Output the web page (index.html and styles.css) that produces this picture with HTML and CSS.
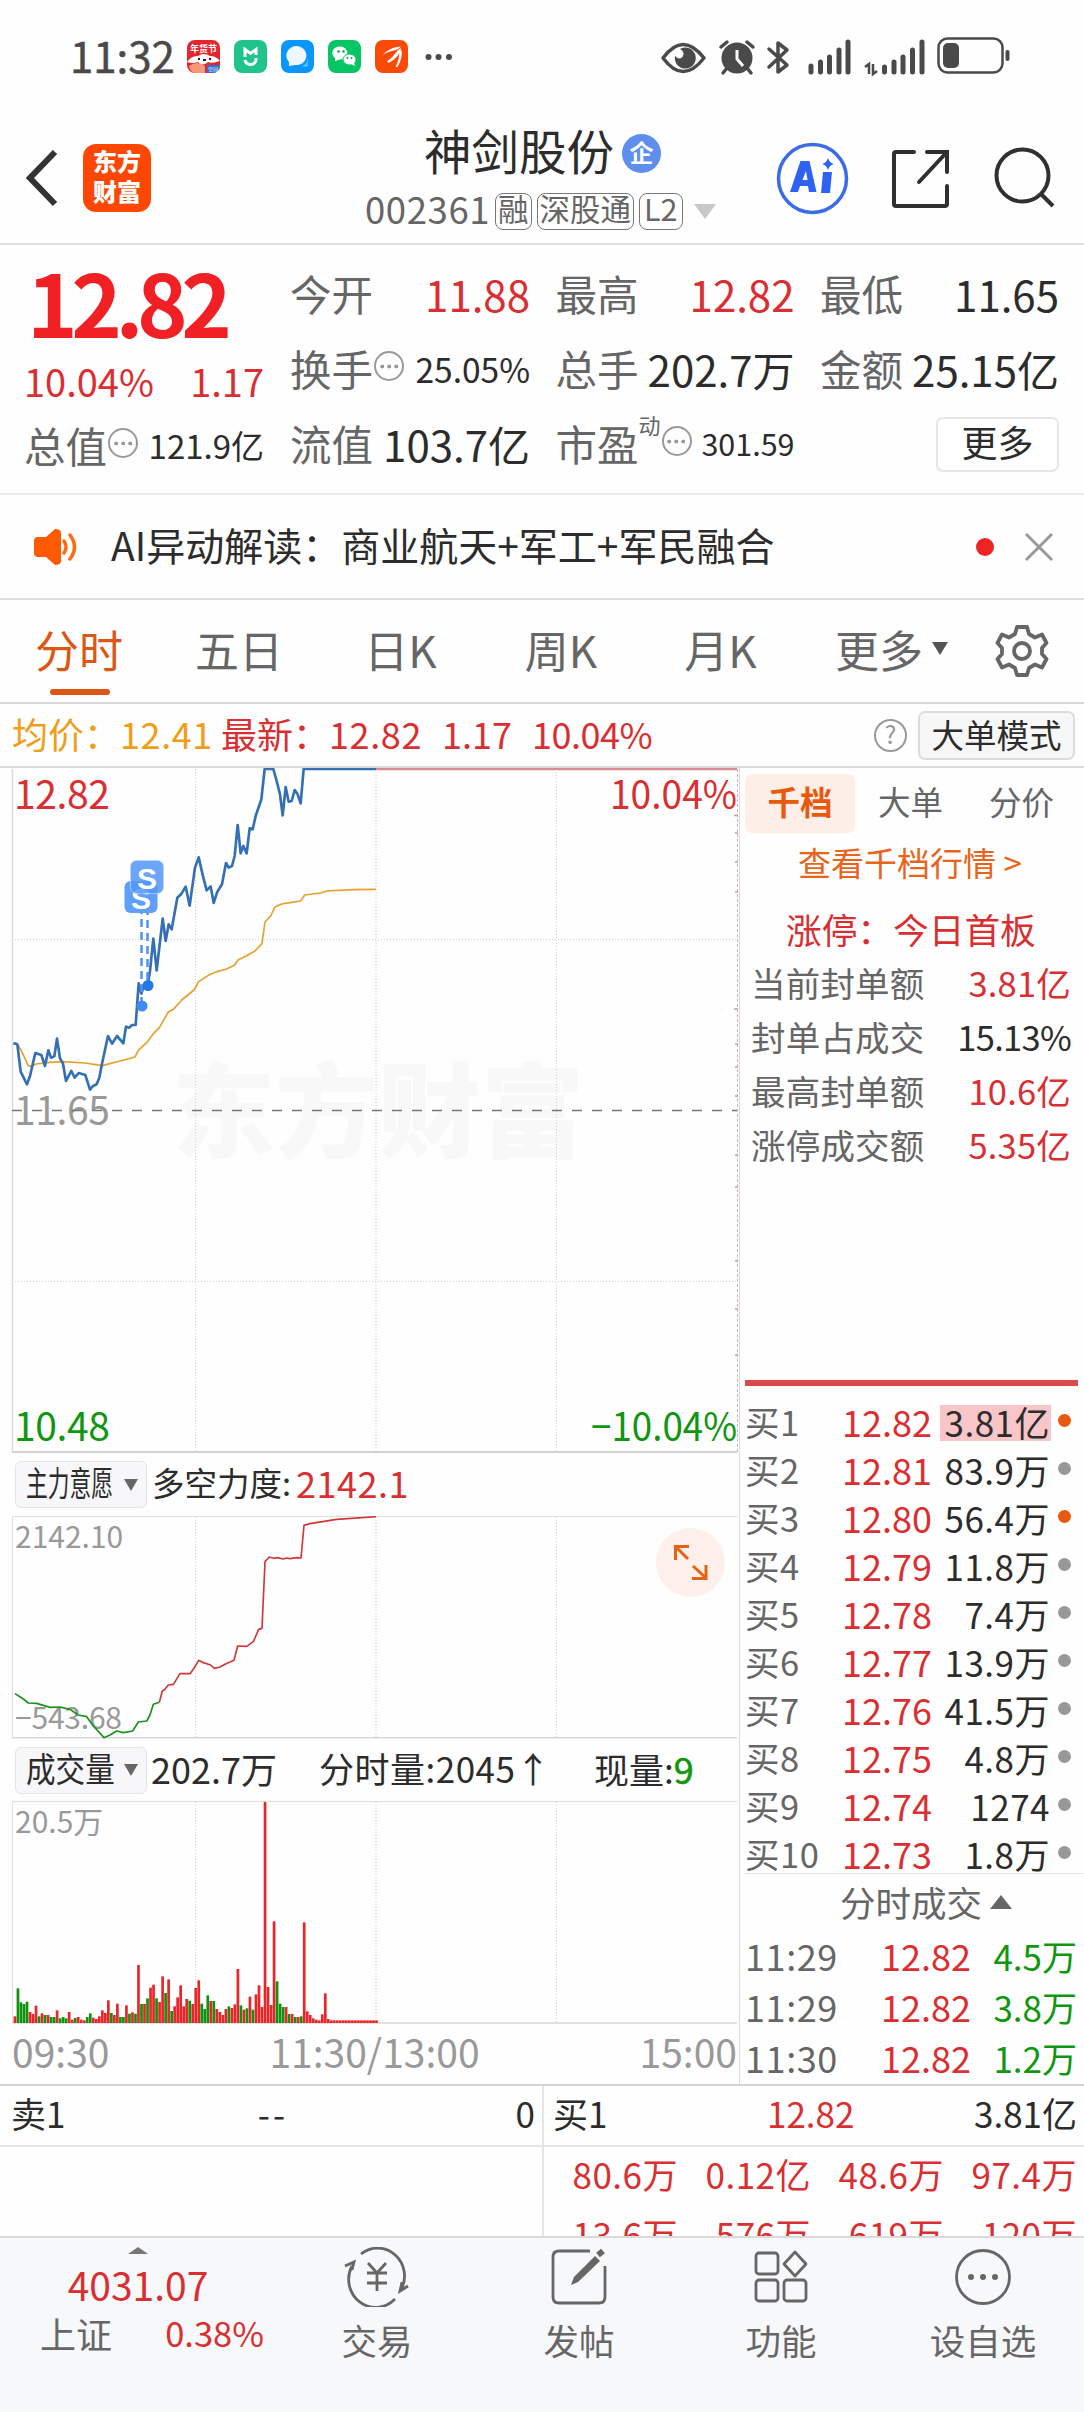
FILE: index.html
```html
<!DOCTYPE html>
<html lang="zh-CN">
<head>
<meta charset="utf-8">
<title>神剑股份 002361</title>
<link rel="stylesheet" href="styles.css">
</head>
<body>
<div class="status">
  <span class="clock">11:32</span>
  <div class="apps">
    <svg class="app" viewBox="0 0 33 33"><rect width="33" height="33" rx="8" fill="#e5242c"/><text x="16.500" y="12" font-size="9" font-weight="700" fill="#fff" text-anchor="middle">年货节</text><path d="M0 22q5-7 11-6q6-4 12 0q6 0 10 5q-8 3-12 1q-6 5-10 0q-5 2-11 0z" fill="#fff"/><path d="M11 19h2M16 20h3M22 19h2" stroke="#222" stroke-width="2"/><path d="M2 26q8-6 16 0v7H9q-6 0-7-7z" fill="#f59a78"/><path d="M20 25h13q0 8-8 8h-5z" fill="#2f6fd6"/><text x="26" y="31" font-size="5" fill="#fff" text-anchor="middle">空间</text></svg>
    <svg class="app" viewBox="0 0 33 33"><rect width="33" height="33" rx="8" fill="#1fc48c"/><path d="M11 17V9.500l5.500 4 5.500-4V15M11 20q1 4.500 5.500 4.500T22 20v-2" fill="none" stroke="#fff" stroke-width="3"/></svg>
    <svg class="app" viewBox="0 0 33 33"><rect width="33" height="33" rx="8" fill="#0a96ff"/><path d="M21 26q5-2 6-8v8q-2 2-6 0z" fill="#49c3ff"/><path d="M8 26v-4a10 9.500 0 1 1 6 3z" fill="#edf6ff"/></svg>
    <svg class="app" viewBox="0 0 33 33"><rect width="33" height="33" rx="8" fill="#07c562"/><path d="M7 21v-3a7.500 6.500 0 1 1 5 1.500z" fill="#fff"/><ellipse cx="21.500" cy="19.500" rx="6.500" ry="5.500" fill="#fff" stroke="#07c562"/><path d="M23 24l4 2-1-4z" fill="#fff"/><g fill="#07a050"><circle cx="10.500" cy="11.500" r="1.200"/><circle cx="15.500" cy="11.500" r="1.200"/><circle cx="19.500" cy="18" r="1"/><circle cx="23.500" cy="18" r="1"/></g></svg>
    <svg class="app" viewBox="0 0 33 33"><rect width="33" height="33" rx="8" fill="#fb4a05"/><path d="M7.500 15.500Q14 7 26 6.500Q23 10 17 11Q11 12 7.500 15.500zM12 21.500Q18 17 21 12.500Q23 9 26 8Q25 17 13.500 23zM20.500 27Q24 20 24 15Q24.500 11 26.500 9.500Q28 18 22.500 27z" fill="#fff"/></svg>
    <svg class="dots" viewBox="0 0 28 8" fill="#4a4a4a"><circle cx="3.500" cy="4" r="3"/><circle cx="13.500" cy="4" r="3"/><circle cx="24" cy="4" r="3"/></svg>
  </div>
  <svg class="sys" viewBox="658 34 356 44" fill="none" stroke="#4a4a4a">
    <path d="M663 58Q683 31 704 58Q683 85 663 58z" stroke-width="3.500" stroke-linejoin="round"/>
    <path d="M680 49a10.500 10.500 0 1 1-5 7q5 5 8 0q2-4-3-7z" fill="#4a4a4a" stroke="none"/>
    <circle cx="737" cy="58" r="15.500" fill="#4a4a4a" stroke="none"/>
    <path d="M737 50v9l6 7" stroke="#fff" stroke-width="3"/>
    <path d="M721 47l6-5M747 42l6 5M727 68l-4 5M747 68l4 5" stroke-width="3.500" stroke-linecap="round"/>
    <path d="M769 49l18 16-9 7V43l9 7-18 17" stroke-width="3.500" stroke-linejoin="round" stroke-linecap="round"/>
    <path d="M811 67v6M820.500 63v10M829.500 58v15M839 51v22M848 43v30" stroke-width="5" stroke-linecap="round" transform="translate(0 -1)"/>
    <path d="M884.500 67v5M894 62v10M903 57v15M912.500 50v22M922 42v30" stroke-width="5" stroke-linecap="round"/>
    <path d="M865 67l4-3v10M873 64v10l4-3" stroke-width="2.500"/>
    <rect x="938.500" y="38.500" width="64" height="34" rx="9" stroke-width="2.500"/>
    <rect x="943" y="43" width="16" height="25" rx="5" fill="#4a4a4a" stroke="none"/>
    <path d="M1007.500 52v7" stroke-width="4" stroke-linecap="round"/>
  </svg>
</div>

<header class="header">
  <svg class="back" viewBox="0 0 34 60"><path d="M29 4L4 30l25 26" fill="none" stroke="#333" stroke-width="6"/></svg>
  <div class="logo"><span>东方</span><span>财富</span></div>
  <div class="title">
    <div class="name">神剑股份<span class="qi">企</span></div>
    <div class="code"><span class="num">002361</span><span class="tag">融</span><span class="tag">深股通</span><span class="tag">L2</span><i class="caret"></i></div>
  </div>
  <svg class="tools" viewBox="775 140 285 76" fill="none" stroke="#303030" stroke-width="4">
    <circle cx="812.500" cy="178.500" r="34" stroke="#3d6ae6" stroke-width="3.500"/>
    <path d="M790 192l10.500-31h9l7 31h-7.500l-1-6h-8l-2 6zM802.500 180h5l-1.500-9z" fill="#2f62f2" stroke="none"/>
    <path d="M823 172h9l-2 21h-9z" fill="#2f62f2" stroke="none"/>
    <path d="M828 158q1.500 5 6 6-4.500 1-6 6-1.500-5-6-6 4.500-1 6-6z" fill="#2f62f2" stroke="none"/>
    <path d="M914 152h-18q-2 0-2 2v50q0 2 2 2h49q2 0 2-2v-18M927 152h20v20M947 152l-28 30" stroke-linecap="round"/>
    <circle cx="1022.500" cy="175.500" r="26"/><path d="M1041 194l12 12"/>
  </svg>
</header>

<section class="quote">
  <div class="q-left">
    <div class="price">12.82</div>
    <div class="pct"><span>10.04%</span><span>1.17</span></div>
    <div class="cell s33"><label>总值</label><i class="more"></i><b>121.9亿</b></div>
  </div>
  <div class="q-grid">
    <div class="cell"><label>今开</label><b class="red">11.88</b></div>
    <div class="cell"><label>最高</label><b class="red">12.82</b></div>
    <div class="cell"><label>最低</label><b>11.65</b></div>
    <div class="cell s34"><label>换手</label><i class="more"></i><b>25.05%</b></div>
    <div class="cell"><label>总手</label><b>202.7万</b></div>
    <div class="cell"><label>金额</label><b>25.15亿</b></div>
    <div class="cell"><label>流值</label><b>103.7亿</b></div>
    <div class="cell s30"><label>市盈</label><sup>动</sup><i class="more"></i><b>301.59</b></div>
    <div class="cell"><button class="btn-more">更多</button></div>
  </div>
</section>

<section class="news">
  <svg class="horn" viewBox="0 0 46 38"><path d="M5 9h8L22 1q6 0 6 4v28q0 4-6 4l-9-8H5q-4 0-4-4V13q0-4 4-4z" fill="#ff5a00"/><path d="M31 13q4 6 0 12M37 7q9 12 0 24" fill="none" stroke="#ff6a14" stroke-width="3.500" stroke-linecap="round"/></svg>
  <span class="headline">AI异动解读：商业航天+军工+军民融合</span>
  <i class="reddot"></i>
  <svg class="close" viewBox="0 0 30 30"><path d="M2 2l26 26M28 2L2 28" stroke="#999" stroke-width="3"/></svg>
</section>

<nav class="tabs">
  <span class="on">分时</span><span>五日</span><span>日K</span><span>周K</span><span>月K</span><span class="t-more">更多<i></i></span>
  <svg class="gear" viewBox="-27 -27 54 54" fill="none" stroke="#666" stroke-width="3.800"><path d="M-5-24H5L7-17 13-13.500 20-16.500 24.500-8 20-3V3L24.500 8 20 16.500 13 13.500 7 17 5 24H-5L-7 17-13 13.500-20 16.500-24.500 8-20 3V-3L-24.500-8-20-16.500-13-13.500-7-17z" stroke-linejoin="round"/><circle r="8"/></svg>
</nav>

<section class="info">
  <span class="avg">均价：</span><span class="avg v1">12.41</span><span class="red">最新：</span><span class="red v2">12.82</span><span class="red v3">1.17</span><span class="red v4">10.04%</span>
  <i class="help">?</i><button class="mode">大单模式</button>
</section>

<main class="body">
  <div class="charts">
    <svg class="c-main" viewBox="0 767 739 685">
      <text x="172" y="1149" class="mark" textLength="412">东方财富</text>
      <path d="M195.500 768v683M376 768v683M556.500 768v683M12 938.500h725M12 1280.500h725" class="grid"/>
      <path d="M737.500 768v683" stroke="#c9b5b8" stroke-dasharray="3 2"/>
      <path d="M734 814.500h4M735 832h3M735 861h3M735 891h3M734 1008h4M735 1043h3M735 1066h3M735 1095h3M735 1154h3M735 1186h3M735 1260h3M735 1308h3M735 1354h3" stroke="#c99" stroke-width="1.500"/>
      <path d="M12.500 768v683" stroke="#dcdcdc" stroke-width="1.500"/><path d="M12 1451h725" stroke="#d2d2d2" stroke-width="2"/>
      <text x="14" y="808" class="ax red" textLength="96">12.82</text><text x="737" y="808" class="ax red end" textLength="127" lengthAdjust="spacingAndGlyphs">10.04%</text>
      <text x="14" y="1124" class="ax gray" textLength="96">11.65</text>
      <text x="14" y="1440" class="ax green" textLength="96">10.48</text><text x="737" y="1440" class="ax green end" textLength="146" lengthAdjust="spacingAndGlyphs">−10.04%</text>
      <path d="M12 1109.500h725" stroke="#777" stroke-width="1.700" stroke-dasharray="10 10"/>
      <path d="M376 768h361" stroke="#d98b94" stroke-width="2.500"/>
      <g transform="translate(0 600) scale(.33333)" fill="none" stroke-linejoin="round">
        <path stroke="#e5a12d" stroke-width="5" d="M45 1325L55 1333 70 1362 85 1394 95 1396 108 1389 150 1384 189 1382 255 1386 306 1394 330 1388 360 1380 405 1368 415 1348 440 1325 460 1298 478 1280 505 1233 520 1225 545 1197 582 1167 596 1142 625 1123 650 1112 680 1104 704 1092 714 1077 740 1064 765 1050 786 1027 795 963 812 945 825 918 845 909 870 905 902 900 914 882 960 876 980 870 1060 866 1128 865"/>
        <path stroke="#356fb4" stroke-width="8" d="M40 1327L52 1330 62 1412 81 1450 90 1425 106 1356 124 1362 135 1395 145 1348 153 1370 163 1366 171 1313 180 1372 189 1388 198 1440 214 1410 224 1430 236 1416 256 1422 270 1466 279 1455 290 1450 298 1430 306 1388 324 1305 336 1328 351 1305 370 1327 378 1277 388 1280 396 1272 407 1272 416 1147 424 1178 433 1150 441 1165 450 1110 460 1013 470 1108 488 953 497 1020 506 970 515 985 532 890 543 880 557 857 569 914 585 800 596 769 610 830 620 868 632 856 641 906 652 872 666 850 678 786 686 800 696 795 704 765 713 672 722 757 730 735 740 757 749 682 758 685 767 645 784 595 794 504 820 504 830 540 840 580 848 643 857 558 866 602 875 600 884 567 893 580 902 607 911 504 1128 504"/>
      </g>
      <g>
        <path d="M141.500 905v96M147.500 893v88" stroke="#4f94ee" stroke-width="2.500" stroke-dasharray="8 5"/>
        <circle cx="142" cy="1005" r="5.500" fill="#3f8cf0"/><circle cx="148" cy="984.500" r="5.500" fill="#2378e6"/>
        <rect x="124.500" y="880" width="33" height="32" rx="6" fill="#5f9ffa"/><text x="141" y="908" class="s">S</text>
        <rect x="130.500" y="859.500" width="33" height="33" rx="6" fill="#5297fa" fill-opacity=".85" stroke="#b9d6ff" stroke-width=".7"/><text x="147" y="888" class="s">S</text>
      </g>
    </svg>
    <div class="bar"><span class="pick"><em class="narrow">主力意愿</em><i></i></span><span class="t1">多空力度:</span><span class="t2 red">2142.1</span></div>
    <svg class="c-force" viewBox="0 1515 739 223">
      <path d="M195.500 1516v221M376 1516v221M556.500 1516v221" class="grid"/>
      <path d="M12.500 1737v-221.500h725" fill="none" stroke="#dedede"/><path d="M12 1736.700h725" stroke="#d8d8d8" stroke-width="1.500"/>
      <text x="15" y="1547" class="sm gray">2142.10</text><text x="15" y="1728" class="sm gray" textLength="107">−543.68</text>
      <g transform="translate(0 1360) scale(.33333)" fill="none" stroke-linejoin="round" stroke-width="5">
        <path stroke="#1d911d" d="M45 998L70 1014 85 1026 110 1027 150 1039 180 1038 210 1045 235 1062 260 1067 280 1095 312 1130 330 1122 350 1110 370 1115 398 1110 415 1083 440 1080 450 1062 460 1030 478 1024"/>
        <path stroke="#d0393b" d="M478 1024L487 990 495 985 505 972 520 970 540 938 570 938 582 922 596 898 610 905 632 912 643 922 660 918 675 910 702 898 713 855 740 856 760 842 776 805 786 802 795 602 808 588 820 592 832 590 850 594 860 591 870 593 890 590 903 591 912 493 930 488 1010 475 1128 467"/>
      </g>
      <circle cx="690.500" cy="1561.500" r="34.500" fill="#fdf0ea"/>
      <path d="M688 1558l-12-12M675.500 1559v-13.500h13.500M693 1565l13 12M706 1564v13.500h-14" fill="none" stroke="#e06414" stroke-width="3"/>
    </svg>
    <div class="bar b2"><span class="pick"><em class="narrow w3">成交量</em><i></i></span><span class="t3">202.7万</span><span class="t4">分时量:2045↑</span><span class="t5">现量:<b class="green">9</b></span></div>
    <svg class="c-vol" viewBox="0 1800 739 223">
      <path d="M195.500 1801v220M376 1801v220M556.500 1801v220" class="grid"/>
      <path d="M12.500 2022v-221.500h725" fill="none" stroke="#dedede"/><path d="M12 2022h725" stroke="#e2e2e2" stroke-width="2"/>
      <text x="15" y="1832" class="sm gray">20.5万</text>
      <g id="bars"></g>
    </svg>
    <div class="times"><span>09:30</span><span>11:30/13:00</span><span>15:00</span></div>
  </div>

  <aside class="side">
    <div class="stabs"><span class="on">千档</span><span>大单</span><span>分价</span></div>
    <div class="link">查看千档行情 &gt;</div>
    <div class="limit">涨停：今日首板</div>
    <div class="stats">
      <div><span>当前封单额</span><b class="red">3.81亿</b></div>
      <div><span>封单占成交</span><b class="p">15.13%</b></div>
      <div><span>最高封单额</span><b class="red">10.6亿</b></div>
      <div><span>涨停成交额</span><b class="red">5.35亿</b></div>
    </div>
    <hr class="redline">
    <div class="bids">
      <div><span>买1</span><em>12.82</em><b class="hot">3.81亿</b><i class="o"></i></div>
      <div><span>买2</span><em>12.81</em><b>83.9万</b><i></i></div>
      <div><span>买3</span><em>12.80</em><b>56.4万</b><i class="o"></i></div>
      <div><span>买4</span><em>12.79</em><b>11.8万</b><i></i></div>
      <div><span>买5</span><em>12.78</em><b>7.4万</b><i></i></div>
      <div><span>买6</span><em>12.77</em><b>13.9万</b><i></i></div>
      <div><span>买7</span><em>12.76</em><b>41.5万</b><i></i></div>
      <div><span>买8</span><em>12.75</em><b>4.8万</b><i></i></div>
      <div><span>买9</span><em>12.74</em><b>1274</b><i></i></div>
      <div><span>买10</span><em>12.73</em><b>1.8万</b><i></i></div>
    </div>
    <div class="deals-h">分时成交<i></i></div>
    <div class="deals">
      <div><span>11:29</span><em>12.82</em><b>4.5万</b></div>
      <div><span>11:29</span><em>12.82</em><b>3.8万</b></div>
      <div><span>11:30</span><em>12.82</em><b>1.2万</b></div>
    </div>
  </aside>
</main>

<section class="queue">
  <div class="qcol"><div class="qrow"><span>卖1</span><span class="dash">--</span><span>0</span></div></div>
  <div class="qcol buy"><div class="qrow"><span>买1</span><span class="red">12.82</span><span>3.81亿</span></div>
    <div class="orders"><span>80.6万</span><span>0.12亿</span><span>48.6万</span><span>97.4万</span><span>13.6万</span><span>576万</span><span>619万</span><span>120万</span></div></div>
</section>

<footer class="nav">
  <div class="index"><i></i><div class="ival">4031.07</div><div class="irow"><span>上证</span><b>0.38%</b></div></div>
  <div class="item"><svg viewBox="-34 -30 68 60"><path d="M-16-23A27 28 0 0 1 24 13M-25-11A27 28 0 0 0 18 22M-32-11l9-4-2 8M31 9l-8 5 2-9" /><path d="M-9-14L0-4 9-14M0-4v18M-10-4h20M-10 6h20"/></svg><span>交易</span></div>
  <div class="item"><svg viewBox="-34 -30 68 60"><path d="M11-26h-31q-6 0-6 6v40q0 6 6 6h40q6 0 6-6v-31"/><path d="M-8 8l3-8L16-21l5 5L-1 5z" fill="#666" stroke="none"/><path d="M19-22l5-4" stroke-width="6"/></svg><span>发帖</span></div>
  <div class="item"><svg viewBox="-34 -30 68 60"><rect x="-25" y="-24" width="22" height="21" rx="3"/><path d="M14-25l11 12-11 12L3-13z" stroke-linejoin="round"/><rect x="-25" y="3" width="22" height="21" rx="3"/><rect x="3" y="3" width="22" height="21" rx="3"/></svg><span>功能</span></div>
  <div class="item"><svg viewBox="-34 -30 68 60"><circle r="26.500"/><g fill="#666" stroke="none"><circle cx="-12" r="3"/><circle r="3"/><circle cx="12" r="3"/></g></svg><span>设自选</span></div>
</footer>
<script src="chart.js"></script>
</body>
</html>
```
FILE: chart.js
```js
// Minute volume bars: colour letter (r = up, g = down) followed by height in thirds of a pixel.
const volumes = ("r20 g104 g62 g57 g64 r33 r27 r52 g20 r29 g24 r24 g18 g18 r38 g14 g18 g14 r33 r10 " +
  "g15 r18 r10 r8 g18 g29 r16 r12 r20 r38 r30 r68 g30 r24 r58 g18 g18 r53 g28 r32 " +
  "g28 r174 g57 r57 g74 r106 r115 g74 r63 r140 g90 r131 g36 r50 r77 r113 r50 r72 g67 r57 " +
  "r105 r128 g58 g42 g83 r66 g66 r42 r33 r24 r42 g50 r45 r56 r162 g53 r40 g44 r79 g40 " +
  "r86 r113 r48 r663 r108 r54 r305 g125 g58 g48 r48 g27 r27 g18 r18 g20 r302 r35 r24 r14 " +
  "r10 r8 r26 r89 r12").split(" ");
while (volumes.length < 121) volumes.push("r8");

const bars = document.getElementById("bars");
volumes.forEach((v, i) => {
  const h = Number(v.slice(1)) / 3;
  const rect = document.createElementNS("http://www.w3.org/2000/svg", "rect");
  rect.setAttribute("x", (13.6 + i * 3.013).toFixed(2));
  rect.setAttribute("y", (2022 - h).toFixed(2));
  rect.setAttribute("width", "2.7");
  rect.setAttribute("height", h.toFixed(2));
  rect.setAttribute("class", v[0] === "r" ? "up" : "down");
  bars.appendChild(rect);
});
```
FILE: styles.css
```css
* { box-sizing: border-box; }
body { margin: 0; width: 1084px; height: 2412px; overflow: hidden; background: #fefefe; color: #2c2c2c; font-family: "Noto Sans CJK SC", "Noto Sans", sans-serif; font-size: 36px; line-height: 1; white-space: nowrap; }
b, em, i { font-weight: 400; font-style: normal; }
button { font: inherit; color: inherit; padding: 0; }
svg { display: block; flex: none; }
.red { color: #d92f32; fill: #d92f32; }
.green { color: #109610; fill: #109610; }

.status { height: 112px; display: flex; align-items: flex-start; padding: 34px 70px 0; }
.clock { width: 117px; font-size: 42px; color: #4a4a4a; font-weight: 400; line-height: 41px; -webkit-text-stroke: .5px #4a4a4a; }
.apps { display: flex; gap: 14px; padding-top: 6px; width: 471px; align-items: center; }
.app { width: 33px; height: 33px; }
.dots { width: 28px; height: 8px; margin-left: 3px; }
.sys { width: 356px; height: 44px; }

.header { height: 133px; border-bottom: 2px solid #dedede; display: flex; align-items: flex-start; position: relative; }
.back { width: 34px; height: 60px; margin: 36px 0 0 26px; }
.logo { width: 68px; height: 68px; margin: 32px 0 0 23px; border-radius: 13px; background: #fd4703; color: #fff; font-size: 24px; font-weight: 900; display: flex; flex-direction: column; align-items: center; justify-content: center; line-height: 30px; padding-bottom: 4px; }
.title { width: 350px; margin-left: 214px; }
.name { display: flex; align-items: center; padding-left: 59px; margin-top: 13px; height: 50px; font-size: 47.5px; }
.qi { width: 39px; height: 39px; margin-left: 8px; margin-top: 6px; border-radius: 50%; background: #5e8fec; color: #fff; font-size: 24px; font-weight: 700; line-height: 36px; text-align: center; }
.code { display: flex; align-items: center; gap: 5px; margin-top: 18px; height: 36px; color: #666; }
.num { font-size: 36.500px; width: 125px; letter-spacing: .6px; padding-bottom: 3px; }
.tag { height: 37px; border: 1.500px solid #777; border-radius: 8px; font-size: 30.500px; line-height: 29px; padding: 0 2px; }
.tag:last-of-type { padding: 0 4px; }
.caret { border: 11px solid transparent; border-top: 15px solid #c8c8c8; border-bottom: 0; margin-left: 6px; }
.tools { width: 285px; height: 76px; margin: 28px 0 0 60px; }

.quote { height: 250px; padding: 13px 25px 0 24px; border-bottom: 2px solid #ececec; display: flex; gap: 26px; }
.q-left { width: 240px; }
.price { height: 96px; line-height: 86px; font-size: 86px; font-weight: 700; color: #f02024; letter-spacing: -6.500px; padding-left: 3px; }
.pct { height: 56px; display: flex; justify-content: space-between; align-items: center; font-size: 38px; color: #d92f32; padding-bottom: 3px; }
.q-grid { display: grid; grid-template-columns: 240px 239px 239px; column-gap: 25.500px; grid-auto-rows: 75px; }
.cell { display: flex; align-items: center; height: 75px; padding-bottom: 4px; font-size: 42px; }
.cell label { font-size: 41.500px; color: #666; }
.cell b { margin-left: auto; }
.s33 b { font-size: 33px; } .s34 b { font-size: 33.500px; } .s30 b { font-size: 30.500px; }
.more { width: 30px; height: 30px; border: 2px solid #999; border-radius: 50%; margin: 0 0 5px 1px; background: radial-gradient(circle, #999 1.700px, transparent 2.200px) 50% 50% / 6.500px 25px no-repeat, radial-gradient(circle, #999 1.700px, transparent 2.200px) 15% 50% / 6.500px 25px no-repeat, radial-gradient(circle, #999 1.700px, transparent 2.200px) 85% 50% / 6.500px 25px no-repeat; }
.cell sup { font-size: 22px; align-self: flex-start; margin-top: 5px; color: #666; }
.btn-more { width: 123px; height: 55px; border: 2px solid #e6e6e6; border-radius: 7px; background: #fff; margin-left: auto; margin-top: 1px; font-size: 36px; line-height: 40px; padding-bottom: 6px; }

.news { height: 105px; border-bottom: 2px solid #dedede; display: flex; align-items: center; padding: 0 30px 0 33px; }
.horn { width: 46px; height: 38px; }
.headline { font-size: 39px; margin-left: 32px; flex: 1; padding-bottom: 5px; }
.reddot { width: 18px; height: 18px; border-radius: 50%; background: #ee2424; margin-right: 30px; }
.close { width: 30px; height: 30px; }

.tabs { height: 104px; border-bottom: 2px solid #d8d8d8; position: relative; display: grid; grid-template-columns: 158px 162px 161px 160px 159px 195px 54px; color: #666; font-size: 44px; align-items: center; }
.tabs span { text-align: center; padding-bottom: 5px; }
.tabs .on { color: #dc5714; position: relative; }
.tabs .on::after { content: ""; position: absolute; left: 50px; top: 62px; width: 60px; height: 6px; border-radius: 3px; background: #dc5714; }
.t-more { display: flex; align-items: center; padding-left: 35px; gap: 9px; }
.t-more i { border: 8px solid transparent; border-top: 13px solid #555; border-bottom: 0; }
.gear { width: 54px; height: 54px; }

.info { height: 64px; border-bottom: 2px solid #dcdcdc; display: flex; align-items: center; padding-left: 12px; font-size: 36px; position: relative; }
.info span { padding-bottom: 5px; }
.avg { color: #f09d18; }
.v1 { width: 101px; letter-spacing: .6px; } .v2 { width: 113px; letter-spacing: .6px; } .v3 { width: 90px; }
.v4 { letter-spacing: -.5px; }
.help { margin-left: auto; width: 33px; height: 33px; border: 2.500px solid #999; border-radius: 50%; color: #999; font-size: 25px; line-height: 24px; text-align: center; }
.mode { width: 157px; height: 49px; margin: 0 9px 0 11px; border: 2px solid #dcdcdc; border-radius: 7px; background: #f7f7f8; font-size: 32.500px; line-height: 38px; padding-bottom: 3px; }

.body { height: 1318px; display: flex; border-bottom: 2px solid #d4d4d4; }
.charts { width: 739px; }
.c-main { width: 739px; height: 685px; }
.c-force, .c-vol { width: 739px; height: 223px; }
.grid { stroke: #d0d0d0; stroke-dasharray: 1 2; fill: none; }
.mark { font-size: 103px; font-weight: 900; fill: #f8f8f9; }
.ax { font-size: 39px; }
.sm { font-size: 30px; }
.gray { fill: #999; }
.end { text-anchor: end; }
.s { font: 700 30px "Liberation Sans", sans-serif; fill: #fff; text-anchor: middle; }
.up { fill: #e8262a; }
.down { fill: #0d930d; }
.bar { height: 63px; display: flex; align-items: center; padding-left: 15px; font-size: 35px; }
.pick { width: 132px; height: 47px; border: 1.500px solid #e4e4e6; border-radius: 6px; background: #f7f7f9; display: flex; align-items: center; justify-content: space-between; padding: 0 8px 0 10px; }
.pick i { border: 7.500px solid transparent; border-top: 12px solid #666; border-bottom: 0; }
.narrow { display: block; width: 88px; font-size: 34px; transform: scaleX(.64); transform-origin: 0 50%; padding-bottom: 5px; }
.w3 { transform: scaleX(.87); }
.bar > span:not(.pick) { padding-bottom: 5px; }
.t1 { font-size: 32.500px; margin-left: 5px; width: 144px; }
.t2 { font-size: 36px; letter-spacing: .5px; }
.b2 { height: 62px; }
.t3 { margin-left: 4px; width: 168px; font-size: 36px; }
.t4 { width: 275px; letter-spacing: .5px; }
.t5 b { font-size: 36px; -webkit-text-stroke: .6px #109610; }
.times { height: 61px; display: grid; grid-template-columns: 1fr 240px 1fr; padding: 8px 2px 0 12px; font-size: 39px; color: #999; }
.times span:nth-child(2) { text-align: center; }
.times span:last-child { text-align: right; }

.side { flex: 1; border-left: 1.500px solid #dcdcdc; padding-left: 5px; font-size: 35px; }
.stabs { display: flex; padding-top: 6px; font-size: 32.500px; color: #666; height: 66px; }
.stabs span { width: 111px; height: 59px; line-height: 53px; text-align: center; }
.stabs .on { width: 110px; background: #fdeee8; border-radius: 7px; color: #e8590c; font-weight: 700; }
.link { height: 62px; line-height: 56px; font-size: 33px; color: #e8641a; padding-left: 53px; }
.limit { height: 62px; line-height: 65px; font-size: 35.700px; color: #d92f32; padding-left: 41px; }
.stats { padding: 0 13px 0 6px; height: 422px; }
.stats div { display: flex; justify-content: space-between; height: 54px; line-height: 48px; font-size: 34.500px; letter-spacing: .2px; }
.stats span { color: #666; }
.stats .p { letter-spacing: -.7px; }
.redline { margin: 0 6px 0 0; border: 0; height: 6px; background: #da4c4c; }
.bids { height: 488px; padding-top: 13px; overflow: hidden; border-bottom: 1.500px solid #e4e4e4; }
.bids div { display: flex; height: 48px; align-items: center; }
.bids span { width: 97px; font-size: 34.500px; color: #666; padding: 0 0 4px 0; letter-spacing: .6px; }
.bids em, .deals em { color: #d92f32; }
.bids em { font-size: 36px; width: 91px; padding-bottom: 4px; }
.bids b { width: 118px; text-align: right; padding: 0 1px 4px 0; letter-spacing: .5px; }
.bids .hot { background: #f8c5c9; width: 111px; margin-left: 7px; height: 36px; line-height: 33px; padding: 0 1px 0 0; }
.bids i { width: 13px; height: 13px; border-radius: 50%; background: #999; margin: 0 0 5px 7px; }
.bids i.o { background: #e8590c; }
.deals-h { height: 58px; font-size: 35.500px; color: #666; display: flex; align-items: center; padding: 0 0 2px 95px; gap: 8px; }
.deals-h i { border: 11px solid transparent; border-bottom: 14px solid #666; border-top: 0; }
.deals div { display: flex; height: 51px; line-height: 47px; font-size: 36px; }
.deals span { width: 136px; color: #666; letter-spacing: .6px; }
.deals b { margin-left: auto; padding-right: 7px; color: #109610; font-size: 35px; }

.queue { height: 152px; display: flex; border-bottom: 2px solid #dadada; overflow: hidden; font-size: 35px; }
.qcol { width: 542px; }
.buy { border-left: 2px solid #e4e4e4; }
.buy .qrow { padding-left: 9px; grid-template-columns: 214px 1fr 1fr; }
.qrow { height: 61px; border-bottom: 2px solid #e4e4e4; display: grid; grid-template-columns: 1fr auto 1fr; padding: 0 7px 6px 11px; align-items: center; }
.qrow span:last-child { text-align: right; }
.dash { letter-spacing: 3px; }
.orders { display: grid; grid-template-columns: repeat(4, 133px); grid-auto-rows: 60px; padding-left: 1px; line-height: 54px; text-align: right; color: #d92f32; letter-spacing: .5px; }

.nav { height: 176px; background: #f7f8fa; display: grid; grid-template-columns: 276px repeat(4, 202px); color: #666; }
.index { display: flex; flex-direction: column; align-items: center; padding-top: 9px; }
.index i { border: 10px solid transparent; border-bottom: 7px solid #777; border-top: 0; }
.ival { font-size: 39px; color: #d92f32; margin-top: 11px; }
.irow { display: flex; justify-content: space-between; width: 224px; margin: 11px 0 0 28px; }
.irow b { color: #d92f32; font-size: 34.500px; }
.item { display: flex; flex-direction: column; align-items: center; padding-top: 9px; font-size: 35.500px; }
.item svg { width: 68px; height: 60px; fill: none; stroke: #666; stroke-width: 2.800; margin-bottom: 15px; }
```
